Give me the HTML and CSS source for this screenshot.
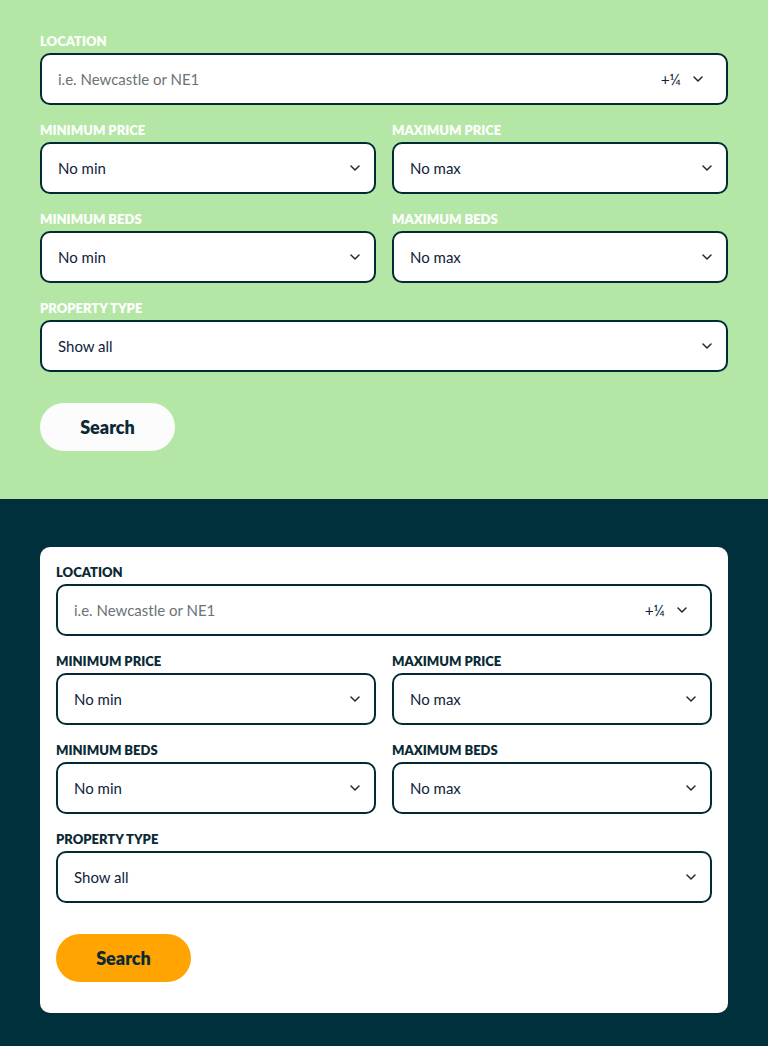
FILE: index.html
```html
<!DOCTYPE html>
<html lang="en">
<head>
<meta charset="utf-8">
<title>Property search</title>
<link rel="stylesheet" href="styles.css">
</head>
<body>
<section class="band band-green">
  <form class="search">
    <div class="field">
      <label class="label">Location</label>
      <div class="control">
        <span class="placeholder">i.e. Newcastle or NE1</span>
        <span class="radius">+¼</span>
        <svg class="chev chev-loc" viewBox="0 0 10 6"><path d="M1 1l4 4 4-4" fill="none" stroke="currentColor" stroke-width="1.5" stroke-linecap="round" stroke-linejoin="round"/></svg>
      </div>
    </div>
    <div class="pair">
      <div class="field">
        <label class="label">Minimum price</label>
        <div class="control"><span class="value">No min</span><svg class="chev" viewBox="0 0 10 6"><path d="M1 1l4 4 4-4" fill="none" stroke="currentColor" stroke-width="1.5" stroke-linecap="round" stroke-linejoin="round"/></svg></div>
      </div>
      <div class="field">
        <label class="label">Maximum price</label>
        <div class="control"><span class="value">No max</span><svg class="chev" viewBox="0 0 10 6"><path d="M1 1l4 4 4-4" fill="none" stroke="currentColor" stroke-width="1.5" stroke-linecap="round" stroke-linejoin="round"/></svg></div>
      </div>
    </div>
    <div class="pair">
      <div class="field">
        <label class="label">Minimum beds</label>
        <div class="control"><span class="value">No min</span><svg class="chev" viewBox="0 0 10 6"><path d="M1 1l4 4 4-4" fill="none" stroke="currentColor" stroke-width="1.5" stroke-linecap="round" stroke-linejoin="round"/></svg></div>
      </div>
      <div class="field">
        <label class="label">Maximum beds</label>
        <div class="control"><span class="value">No max</span><svg class="chev" viewBox="0 0 10 6"><path d="M1 1l4 4 4-4" fill="none" stroke="currentColor" stroke-width="1.5" stroke-linecap="round" stroke-linejoin="round"/></svg></div>
      </div>
    </div>
    <div class="field">
      <label class="label">Property type</label>
      <div class="control"><span class="value">Show all</span><svg class="chev" viewBox="0 0 10 6"><path d="M1 1l4 4 4-4" fill="none" stroke="currentColor" stroke-width="1.5" stroke-linecap="round" stroke-linejoin="round"/></svg></div>
    </div>
    <button type="button" class="btn btn-white">Search</button>
  </form>
</section>
<section class="band band-dark">
  <form class="search card">
    <div class="field">
      <label class="label">Location</label>
      <div class="control">
        <span class="placeholder">i.e. Newcastle or NE1</span>
        <span class="radius">+¼</span>
        <svg class="chev chev-loc" viewBox="0 0 10 6"><path d="M1 1l4 4 4-4" fill="none" stroke="currentColor" stroke-width="1.5" stroke-linecap="round" stroke-linejoin="round"/></svg>
      </div>
    </div>
    <div class="pair">
      <div class="field">
        <label class="label">Minimum price</label>
        <div class="control"><span class="value">No min</span><svg class="chev" viewBox="0 0 10 6"><path d="M1 1l4 4 4-4" fill="none" stroke="currentColor" stroke-width="1.5" stroke-linecap="round" stroke-linejoin="round"/></svg></div>
      </div>
      <div class="field">
        <label class="label">Maximum price</label>
        <div class="control"><span class="value">No max</span><svg class="chev" viewBox="0 0 10 6"><path d="M1 1l4 4 4-4" fill="none" stroke="currentColor" stroke-width="1.5" stroke-linecap="round" stroke-linejoin="round"/></svg></div>
      </div>
    </div>
    <div class="pair">
      <div class="field">
        <label class="label">Minimum beds</label>
        <div class="control"><span class="value">No min</span><svg class="chev" viewBox="0 0 10 6"><path d="M1 1l4 4 4-4" fill="none" stroke="currentColor" stroke-width="1.5" stroke-linecap="round" stroke-linejoin="round"/></svg></div>
      </div>
      <div class="field">
        <label class="label">Maximum beds</label>
        <div class="control"><span class="value">No max</span><svg class="chev" viewBox="0 0 10 6"><path d="M1 1l4 4 4-4" fill="none" stroke="currentColor" stroke-width="1.5" stroke-linecap="round" stroke-linejoin="round"/></svg></div>
      </div>
    </div>
    <div class="field">
      <label class="label">Property type</label>
      <div class="control"><span class="value">Show all</span><svg class="chev" viewBox="0 0 10 6"><path d="M1 1l4 4 4-4" fill="none" stroke="currentColor" stroke-width="1.5" stroke-linecap="round" stroke-linejoin="round"/></svg></div>
    </div>
    <button type="button" class="btn btn-orange">Search</button>
  </form>
</section>
</body>
</html>
```
FILE: styles.css
```css
* { box-sizing: border-box; }
html, body { margin: 0; padding: 0; }
body {
  font-family: Lato, "Open Sans", sans-serif;
  color: #0b2a35;
  background: #00303b;
}
.band { padding: 33px 40px 48px; }
.band-green { background: #b4e7a6; }
.band-dark { background: #00303b; padding: 48px 40px 32px; }
.search { display: flex; flex-direction: column; gap: 17px; }
.card { background: #fff; border-radius: 10px; padding: 17px 16px 31px; }
.pair { display: grid; grid-template-columns: 1fr 1fr; gap: 16px; }
.field { display: flex; flex-direction: column; gap: 4px; }
.label {
  font-size: 13px;
  line-height: 16px;
  font-weight: 800;
  text-transform: uppercase;
  letter-spacing: 0;
}
.band-green .label { color: #fff; }
.card .label { color: #0b2a35; }
.control {
  height: 52px;
  border: 2px solid #022b33;
  border-radius: 10px;
  background: #fff;
  display: flex;
  align-items: center;
  padding: 0 14px 0 16px;
  font-size: 15px;
}
.placeholder { color: #6a7378; flex: 1; }
.value { color: #10233a; flex: 1; }
.radius { color: #10233a; margin-right: 12px; font-size: 15.5px; }
.chev { width: 10px; height: 6px; color: #1d2b33; flex: none; }
.chev-loc { margin-right: 9px; }
.btn {
  margin-top: 14px;
  align-self: flex-start;
  width: 135px;
  height: 48px;
  border: none;
  border-radius: 24px;
  font-family: Lato, sans-serif;
  font-weight: 800;
  font-size: 18px;
  color: #0b2a35;
}
.btn-white { background: #fcfcfc; }
.btn-orange { background: #ffa400; }
```
